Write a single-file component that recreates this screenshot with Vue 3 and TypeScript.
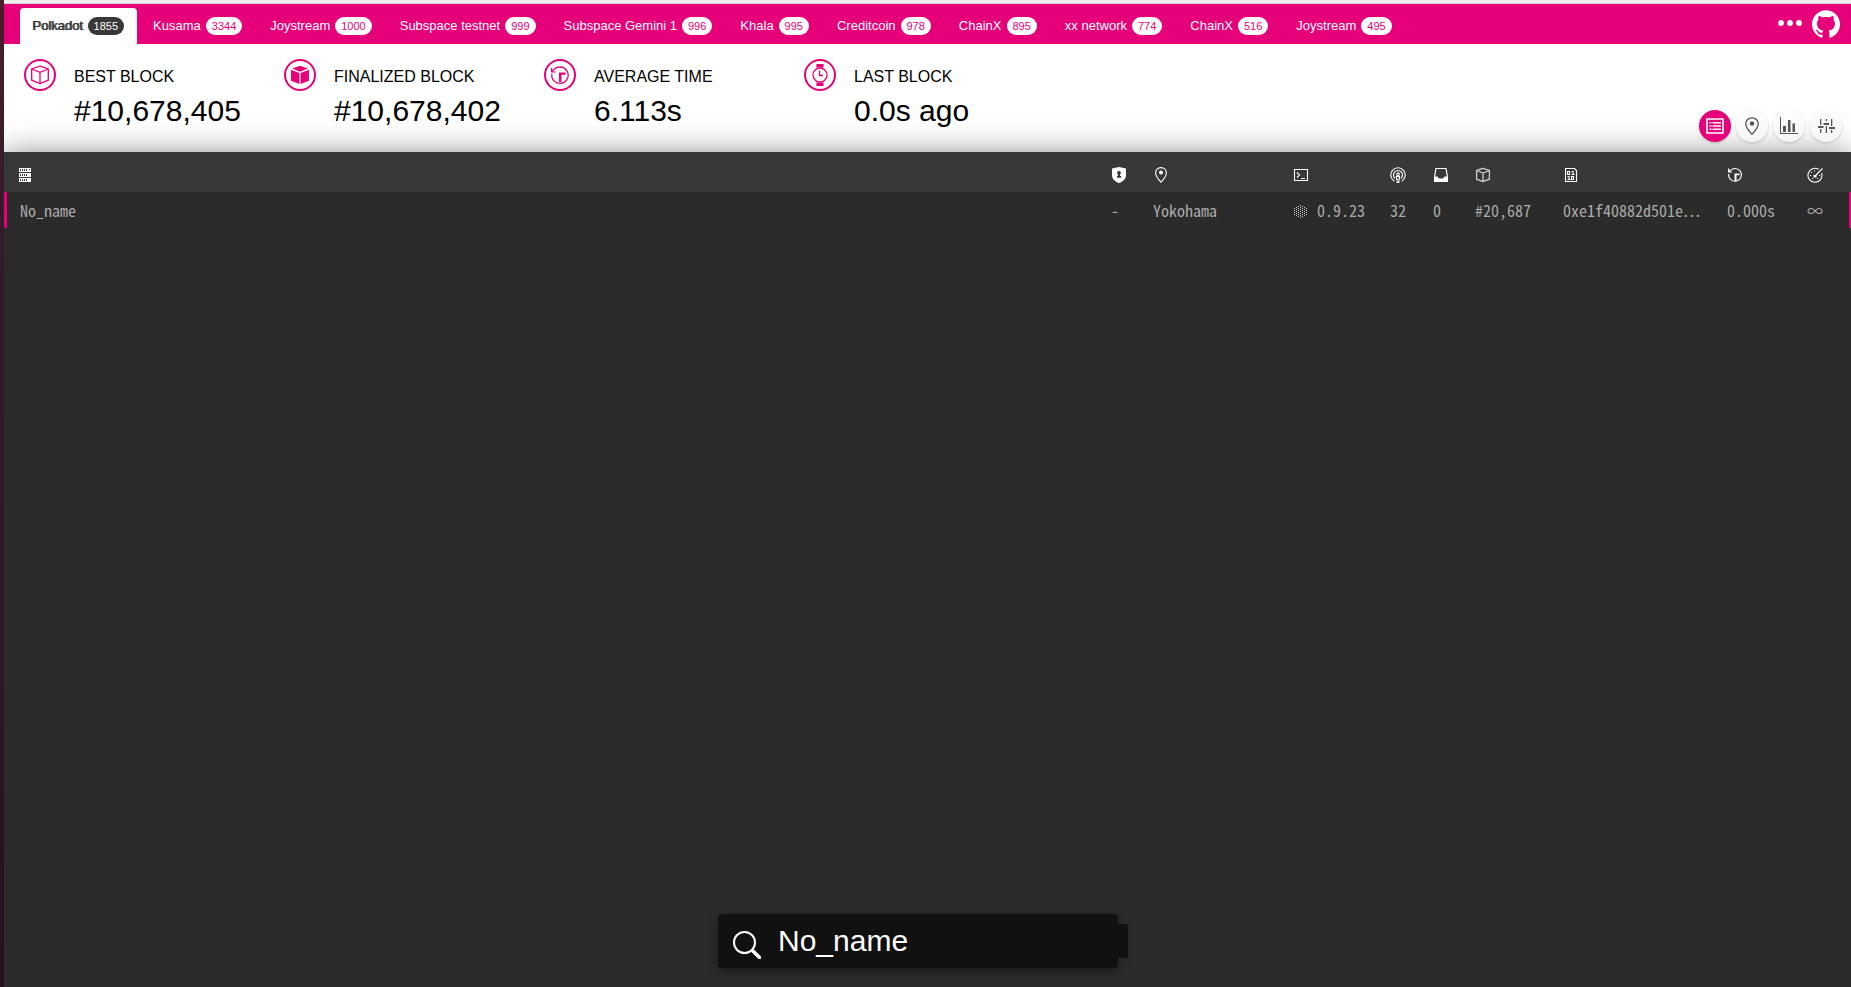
<script setup lang="ts">
import { ref } from 'vue'

interface Chain { name: string; count: number }
interface Stat { label: string; value: string; icon: string }

const chains: Chain[] = [
  { name: 'Polkadot', count: 1855 },
  { name: 'Kusama', count: 3344 },
  { name: 'Joystream', count: 1000 },
  { name: 'Subspace testnet', count: 999 },
  { name: 'Subspace Gemini 1', count: 996 },
  { name: 'Khala', count: 995 },
  { name: 'Creditcoin', count: 978 },
  { name: 'ChainX', count: 895 },
  { name: 'xx network', count: 774 },
  { name: 'ChainX', count: 516 },
  { name: 'Joystream', count: 495 },
]
const selected = ref(0)

const stats: Stat[] = [
  { label: 'Best Block', value: '#10,678,405', icon: 'cube' },
  { label: 'Finalized Block', value: '#10,678,402', icon: 'solid' },
  { label: 'Average Time', value: '6.113s', icon: 'history' },
  { label: 'Last Block', value: '0.0s ago', icon: 'watch' },
]

const views = ['List', 'Map', 'Stats', 'Settings']
const view = ref('List')

const columns = [
  'Node', 'Validator', 'Location', 'Implementation', 'Peers',
  'Transactions', 'Block', 'Block Hash', 'Block Time', 'Propagation',
]
const query = ref('No_name')

// Dots of the hexagonal implementation mark, column by column
const dots: [number, number][] = []
for (let c = -3; c <= 3; c++) {
  const n = 7 - Math.abs(c)
  for (let r = 0; r < n; r++) dots.push([7 + c * 2, 7 + r * 2 - (n - 1)])
}
</script>

<template>
  <div class="page">
    <nav class="chains" aria-label="Chains">
      <a
        v-for="(c, i) in chains"
        :key="i"
        href="#"
        class="chain"
        :class="{ selected: i === selected }"
        @click.prevent="selected = i"
      >{{ c.name }}<span class="count">{{ c.count }}</span></a>
      <a href="#" class="more" aria-label="All chains">
        <svg width="24" height="8" viewBox="0 0 24 8"><circle cx="3" cy="4" r="2.9" /><circle cx="12" cy="4" r="2.9" /><circle cx="21" cy="4" r="2.9" /></svg>
      </a>
      <a href="#" class="github" aria-label="GitHub">
        <svg width="28" height="28" viewBox="0 0 24 24"><path d="M12 .297c-6.63 0-12 5.373-12 12 0 5.303 3.438 9.8 8.205 11.385.6.113.82-.258.82-.577 0-.285-.01-1.04-.015-2.04-3.338.724-4.042-1.61-4.042-1.61C4.422 18.07 3.633 17.7 3.633 17.7c-1.087-.744.084-.729.084-.729 1.205.084 1.838 1.236 1.838 1.236 1.07 1.835 2.809 1.305 3.495.998.108-.776.417-1.305.76-1.605-2.665-.3-5.466-1.332-5.466-5.93 0-1.31.465-2.38 1.235-3.22-.135-.303-.54-1.523.105-3.176 0 0 1.005-.322 3.3 1.23.96-.267 1.98-.399 3-.405 1.02.006 2.04.138 3 .405 2.28-1.552 3.285-1.23 3.285-1.23.645 1.653.24 2.873.12 3.176.765.84 1.23 1.91 1.23 3.22 0 4.61-2.805 5.625-5.475 5.92.42.36.81 1.096.81 2.22 0 1.606-.015 2.896-.015 3.286 0 .315.21.69.825.57C20.565 22.092 24 17.592 24 12.297c0-6.627-5.373-12-12-12" /></svg>
      </a>
    </nav>

    <header class="header">
      <section v-for="s in stats" :key="s.label" class="stat">
        <span class="ring">
          <svg v-if="s.icon === 'cube'" width="20" height="20" viewBox="0 0 20 20" class="line">
            <path d="M10 1.2 18.3 4v11.2L10 18.6 1.7 15.2V4zM1.7 4 10 7.4 18.3 4M10 7.4v11.2" />
          </svg>
          <svg v-else-if="s.icon === 'solid'" width="20" height="20" viewBox="0 0 20 20" class="fill">
            <path d="M10 .8 18 3.6 10 6.8 2 3.6zM1 4.8l8.4 3.3v11L1 15.8zM19 4.8l-8.4 3.3v11l8.4-3.3z" />
          </svg>
          <svg v-else-if="s.icon === 'history'" width="20" height="20" viewBox="0 0 20 20">
            <path class="line" d="M3.200 5.600A8.200 8.200 0 1 1 1.900 8.800" />
            <path class="fill" d="M1 3v4.500h4.800V6.400H3.200L2 3zM9 7.500h6.500v2.200h-4V17H9z" />
          </svg>
          <svg v-else width="24" height="24" viewBox="0 0 24 24">
            <path class="fill" d="M8.400 1h7.200v3.600H8.400zM8.400 19.400h7.200V23H8.400z" />
            <circle class="line" cx="12" cy="12" r="7" />
            <path class="line" d="M11.500 7.500v5H15" />
          </svg>
        </span>
        <div>
          <h2>{{ s.label }}</h2>
          <p>{{ s.value }}</p>
        </div>
      </section>

      <div class="views">
        <button
          v-for="v in views"
          :key="v"
          type="button"
          class="view"
          :class="{ on: v === view }"
          :aria-label="v"
          @click="view = v"
        >
          <svg width="18" height="18" viewBox="0 0 18 18">
            <template v-if="v === 'List'">
              <path class="line" d="M1 2h16v14H1z" />
              <path class="fill" d="M3.500 5h2v1.500h-2zM3.500 8.300h2v1.500h-2zM3.500 11.600h2v1.500h-2zM6.500 5h8.500v1.500H6.500zM6.500 8.300h8.500v1.500H6.500zM6.500 11.600h8.500v1.500H6.500z" />
            </template>
            <template v-else-if="v === 'Map'">
              <path class="line" d="M9 .8c-3.600 0-6.200 2.600-6.200 6C2.800 11 9 17.200 9 17.200S15.200 11 15.200 6.800c0-3.400-2.600-6-6.200-6z" />
              <circle class="fill" cx="9" cy="6.500" r="2.300" />
            </template>
            <template v-else-if="v === 'Stats'">
              <path class="fill" d="M0 0h1v16h17v1H0zM3 9h3v6H3zM8 3h2.500v12H8zM12.500 6.500H15V15h-2.500z" />
            </template>
            <template v-else>
              <path class="fill" d="M3 2h1.300v6H3zM1 9h5.500v2H1zM3 12h1.300v4H3zM8.700 2H10v2H8.700zM6.500 6H12v2H6.500zM8.700 9H10v7H8.700zM14 2h1.300v7H14zM12 10h6v2h-6zM14 13h1.300v3H14z" />
            </template>
          </svg>
        </button>
      </div>
    </header>

    <main class="list">
      <table>
        <colgroup><col v-for="(c, i) in columns" :key="c" :class="'c' + i"></colgroup>
        <thead>
          <tr>
            <th v-for="(c, i) in columns" :key="c" scope="col" :aria-label="c">
              <svg width="16" height="16" viewBox="0 0 16 16">
                <path v-if="i === 0" class="fill" fill-rule="evenodd" d="M0 1h12v4H0zM1 2v2h1V2zM3 2v2h1V2zM5 2v2h1V2zM7 2v2h1V2zM10 2v1h1V2zM0 6h12v4H0zM1 7v2h1V7zM3 7v2h1V7zM5 7v2h1V7zM7 7v2h1V7zM0 11h12v4H0zM1 12v2h1v-2zM3 12v2h1v-2zM5 12v2h1v-2zM7 12v2h1v-2z" />
                <path v-else-if="i === 1" class="fill" fill-rule="evenodd" d="M8 0l7 1.600V8c0 4-3 6.500-7 8-4-1.500-7-4-7-8V1.600zM8 4a1.900 1.900 0 0 0-1 3.500V9H6v1.800h4V9H9V7.500A1.900 1.900 0 0 0 8 4z" />
                <template v-else-if="i === 2">
                  <path class="line" d="M8 .600C4.800.600 2.600 2.800 2.600 5.700 2.600 9.500 8 15.200 8 15.200s5.400-5.700 5.400-9.500C13.400 2.800 11.200.600 8 .600z" />
                  <circle class="fill" cx="8" cy="5.600" r="2" />
                </template>
                <path v-else-if="i === 3" class="line" d="M1.500 2.500h13v11h-13zM4 5.500 6.500 8 4 10.500M8 11.500h4" />
                <template v-else-if="i === 4">
                  <path class="line" d="M4.300 14.200a7.200 7.200 0 1 1 7.400 0M5 11.300a4.500 4.500 0 1 1 6 0" />
                  <path class="line" d="M6.500 9.500h3v2.500h-.600v3.500H7.100V12h-.600z" /><circle class="line" cx="8" cy="7.200" r="1.300" />
                </template>
                <path v-else-if="i === 5" class="fill" fill-rule="evenodd" d="M2.500 1h11L15 9.500V15H1V9.500zM3.500 2 2.200 9.500H4.500L6 11.500h4l1.500-2h2.300L12.500 2z" />
                <path v-else-if="i === 6" class="line dim" d="M8 1.300 14.400 3.500v8.700L8 14.600 1.600 12.200V3.500zM1.600 3.500 8 6l6.400-2.500M8 6v8.600" />
                <path v-else-if="i === 7" class="line" d="M2.500 1.500h9l2 2v11h-11zM4.500 4.500h2v3h-2zM8.500 4.500h1.500v3M8.500 7.500h3M4.500 9.500H6v3M4.500 12.500h3M8.500 9.500h2v3h-2z" />
                <template v-else-if="i === 8">
                  <path class="line" d="M2.600 4.500A6.400 6.400 0 1 1 1.700 7" />
                  <path class="fill" d="M1 1.500v4h4V4.600H3L2 1.500zM7.500 6.500h5v1.700H9.500V14h-2z" />
                </template>
                <template v-else>
                  <path class="line" d="M11.800 2.400A7 7 0 1 0 14.600 6M8 9l7.500-7.500" />
                  <path class="fill" d="M6.500 8h3v2.500h-3zM3 8h1v1H3zM4 5h1v1H4zM7 3.500h1v1H7zM12 8h1v1h-1zM5 11h1v1H5zM10 11h1v1h-1z" />
                </template>
              </svg>
            </th>
          </tr>
        </thead>
        <tbody>
          <tr>
            <td>No_name</td>
            <td>-</td>
            <td>Yokohama</td>
            <td>
              <span class="impl">
                <svg width="16" height="16" viewBox="0 0 16 16" aria-hidden="true"><rect v-for="(d, i) in dots" :key="i" :x="d[0]" :y="d[1]" width="1" height="1" /></svg>0.9.23
              </span>
            </td>
            <td>32</td>
            <td>0</td>
            <td>#20,687</td>
            <td>0xe1f40882d501e…</td>
            <td>0.000s</td>
            <td>∞</td>
          </tr>
        </tbody>
      </table>
    </main>

    <div class="dock">
      <label class="search">
        <svg width="28" height="28" viewBox="0 0 28 28" aria-hidden="true"><circle cx="11.500" cy="11.500" r="10.500" /><path d="m20 20 6.500 6.500" /></svg>
        <input v-model="query" type="text" aria-label="Filter nodes">
      </label>
    </div>
  </div>
</template>

<style>
html, body, #app { height: 100%; }
body { margin: 0; }
</style>

<style scoped>
* { box-sizing: border-box; }
.page {
  --pink: #e6007a;
  position: relative;
  min-height: 100%;
  display: flex;
  flex-direction: column;
  border-left: 4px solid;
  border-image: linear-gradient(#4a1e2a, #351b2c 22%, #23131f) 1;
  font-family: "Liberation Sans", Arial, sans-serif;
  background: #fff;
  overflow: hidden;
}
.chains {
  display: flex;
  align-items: stretch;
  gap: 4px;
  height: 44px;
  padding: 4px 11px 0 16px;
  border-top: 3px solid #efefef;
  background: linear-gradient(#d2d2d2 1px, var(--pink) 1px);
}
.chain {
  display: flex;
  align-items: center;
  gap: 5px;
  height: 37px;
  margin-top: 1px;
  padding: 0 12px 1px;
  border-radius: 4px 4px 0 0;
  color: #fff;
  font-size: 13px;
  line-height: 18px;
  white-space: nowrap;
  text-decoration: none;
}
.count {
  padding: 0 6px;
  border-radius: 9px;
  background: #fff;
  color: var(--pink);
  font-size: 11px;
}
.selected {
  padding-right: 13px;
  background: #fff;
  color: #393838;
  text-shadow: 1px 0 #393838;
}
.selected .count { background: #393838; color: #fff; text-shadow: none; }
.chains svg { display: block; fill: #fff; }
.more { margin-left: auto; padding-top: 12px; }
.github { margin: 3px 0 0 6px; }

.header {
  display: flex;
  height: 108px;
  padding: 15px 9px 0 20px;
}
.stat { display: flex; gap: 18px; width: 260px; }
.ring {
  display: grid;
  place-items: center;
  flex: none;
  width: 32px;
  height: 32px;
  border: 2px solid var(--pink);
  border-radius: 50%;
  color: var(--pink);
}
.stat h2 {
  margin: 8px 0 0;
  font-size: 16px;
  font-weight: 400;
  line-height: 20px;
  text-transform: uppercase;
}
.stat p { margin: 6px 0 0; font-size: 30px; line-height: 36px; }
.line { fill: none; stroke: currentColor; stroke-width: 1.3; }
.fill { fill: currentColor; }
.views {
  position: relative;
  z-index: 1;
  display: flex;
  gap: 5px;
  margin: 51px 0 0 auto;
}
.view {
  display: grid;
  place-items: center;
  width: 32px;
  height: 32px;
  padding: 0;
  border: 0;
  border-radius: 50%;
  background: linear-gradient(#fff, #f4f4f4);
  color: #555;
  box-shadow: 0 1px 3px rgba(0, 0, 0, .2);
}
.view.on { background: var(--pink); color: #fff; }
.view.on .line { stroke-width: 1.6; }

.list {
  flex: 1;
  background: #2b2b2b;
  box-shadow: 0 3px 30px rgba(0, 0, 0, .5);
}
table { width: 100%; border-spacing: 0; table-layout: fixed; }
.c1 { width: 42px; }
.c2 { width: 140px; }
.c3 { width: 97px; }
.c4 { width: 43px; }
.c5 { width: 42px; }
.c6 { width: 88px; }
.c7 { width: 164px; }
.c8 { width: 80px; }
.c9 { width: 60px; }
th { height: 40px; padding: 6px 0 0 16px; background: #393838; color: #fff; }
th:first-child { padding-left: 15px; }
th svg { display: block; }
th .line { stroke-width: 1.1; }
th .dim { stroke-width: 1.3; color: #ccc; }
td {
  height: 36px;
  padding: 0 0 0 16px;
  color: #aaa;
  font: 16px/24px "Noto Sans Mono CJK KR", "Noto Sans Mono CJK SC", "Noto Sans CJK KR", monospace;
  white-space: nowrap;
}
td:first-child { padding-left: 13px; border-left: 3px solid var(--pink); }
td:last-child { border-right: 2px solid var(--pink); }
.impl { display: flex; align-items: center; gap: 8px; }
.impl svg { margin-top: 3px; fill: #ccc; }

.dock {
  position: absolute;
  inset: auto 0 19px;
  display: flex;
  justify-content: center;
  padding-right: 19px;
}
.search {
  display: flex;
  align-items: center;
  gap: 17px;
  width: 400px;
  height: 54px;
  padding-left: 15px;
  border-radius: 4px;
  background: #111;
  box-shadow: 0 3px 12px rgba(0, 0, 0, .4);
}
.search svg { flex: none; margin-top: 8px; fill: none; stroke: #fff; stroke-width: 2; }
.search path { stroke-width: 3.500; stroke-linecap: round; }
.search input {
  flex: none;
  width: 350px;
  height: 34px;
  padding: 0;
  border: 0;
  outline: 0;
  background: #111;
  color: #fff;
  font: 30px/34px "Liberation Sans", Arial, sans-serif;
}
</style>
